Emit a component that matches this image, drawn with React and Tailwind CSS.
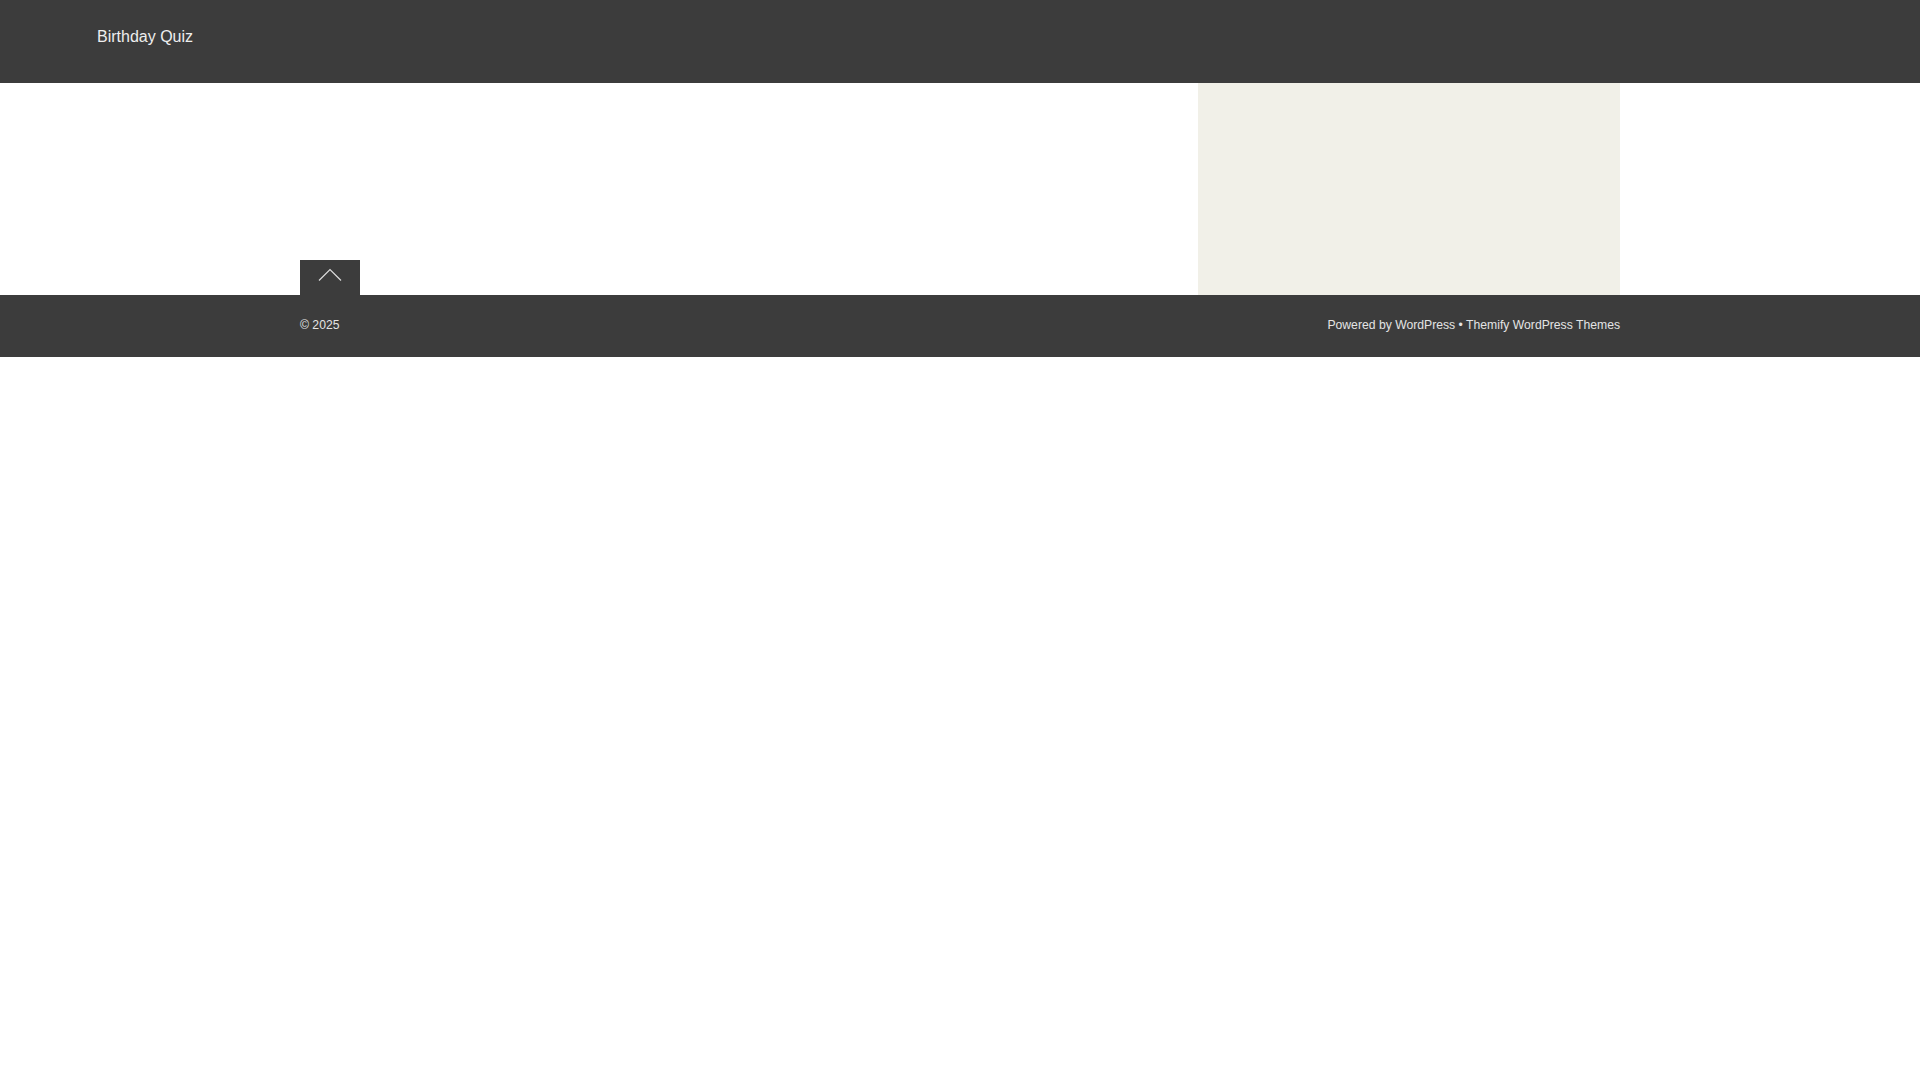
import React from 'react';

const App = () => {
  return (
    <div className="min-h-screen bg-white font-['Liberation_Sans',Arial,sans-serif]">
      {/* Header */}
      <header className="h-[83px] bg-[#3c3c3c] pl-[97px] pt-[25px]">
        <a href="#" className="text-[16px] leading-[20px] text-[#eeeeee]">
          Birthday Quiz
        </a>
      </header>

      {/* Body */}
      <div className="mx-auto flex w-[1320px]">
        <main className="relative h-[212px] flex-1">
          {/* Back to top */}
          <a
            href="#"
            className="absolute bottom-0 left-0 flex h-[35px] w-[60px] items-start justify-center bg-[#3c3c3c] pt-[8px]"
          >
            <svg width="24" height="14" viewBox="0 0 24 14" fill="none">
              <path d="M1 12.5L12 1.5L23 12.5" stroke="#dddddd" strokeWidth="1.2" />
            </svg>
          </a>
        </main>
        <aside className="h-[212px] w-[422px] bg-[#f1f0e8]" />
      </div>

      {/* Footer */}
      <footer className="h-[62px] bg-[#3c3c3c]">
        <div className="mx-auto flex h-full w-[1320px] items-center justify-between pb-[2px] text-[12.2px] text-[#e4e4e4]">
          <span>© 2025</span>
          <span>
            Powered by <a href="#">WordPress</a> • <a href="#">Themify WordPress Themes</a>
          </span>
        </div>
      </footer>
    </div>
  );
};

export default App;
